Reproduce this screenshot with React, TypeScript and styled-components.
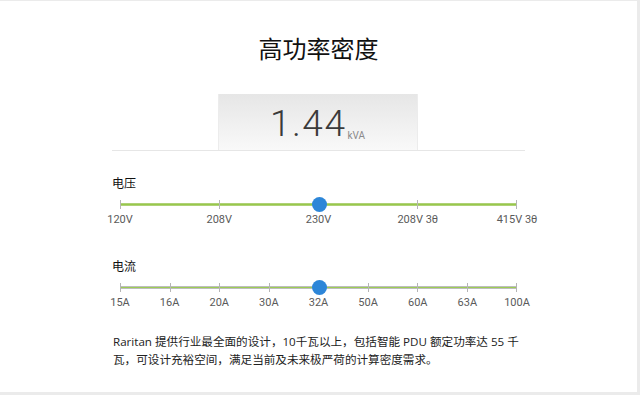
import React from "react";
import styled, { createGlobalStyle } from "styled-components";

const GlobalStyle = createGlobalStyle`
  html, body { margin: 0; padding: 0; background: #ebebeb; }
  body { font-family: Roboto, "Noto Sans CJK SC", sans-serif; }
`;

const Card = styled.div`
  width: 637px;
  height: 391px;
  margin-top: 1px;
  background: #ffffff;
  display: flex;
  justify-content: center;
`;

const Column = styled.div`
  width: 413px;
  display: flex;
  flex-direction: column;
  padding-top: 31px;
`;

const Title = styled.h1`
  margin: 0;
  font-family: "Noto Sans CJK SC", sans-serif;
  font-weight: 400;
  font-size: 24px;
  line-height: 32px;
  color: #111;
  text-align: center;
`;

const ValueRow = styled.div`
  margin-top: 30px;
  display: flex;
  justify-content: center;
  border-bottom: 1px solid #e6e6e6;
`;

const ValueBox = styled.div`
  width: 200px;
  height: 56px;
  margin-left: -2px;
  border-left: 1px solid #ececec;
  border-right: 1px solid #ececec;
  background: linear-gradient(#e6e6e6, #f9f9f9);
  display: flex;
  justify-content: center;
  align-items: flex-end;
  padding-bottom: 7px;
  box-sizing: border-box;
`;

const BigNumber = styled.span`
  font-family: Roboto, sans-serif;
  font-weight: 300;
  font-size: 37px;
  line-height: 38px;
  color: #3a3a3a;
  letter-spacing: 1.5px;
`;

const Unit = styled.span`
  font-family: Roboto, sans-serif;
  font-size: 10px;
  line-height: 10px;
  color: #8a8a8a;
  margin-left: 1px;
  margin-bottom: 2px;
`;

const Label = styled.div<{ $top: number }>`
  margin-top: ${(p) => p.$top}px;
  font-family: "Noto Sans CJK SC", sans-serif;
  font-size: 12px;
  line-height: 16px;
  color: #111;
`;

const SliderRow = styled.div`
  margin: 5px 8px 0;
  height: 16px;
  position: relative;
  display: flex;
  align-items: center;
`;

const Track = styled.div<{ $voltage: boolean }>`
  position: absolute;
  left: 0;
  right: 0;
  top: 7px;
  height: 3px;
  background: ${(p) =>
    p.$voltage
      ? "linear-gradient(#c4d9a0, #98c84a 35%, #98c84a 65%, #c4d9a0)"
      : "linear-gradient(#bdbdbd, #bdbdbd 34%, #9ccc54 34%, #9ccc54 66%, #bdbdbd 66%)"};
`;

const Ticks = styled.div`
  position: relative;
  flex: 1;
  display: flex;
  justify-content: space-between;
  height: 9px;
  margin-top: 1px;
`;

const Tick = styled.span`
  width: 1px;
  height: 9px;
  background: #b5b5b5;
`;

const Thumb = styled.span`
  position: absolute;
  left: 50%;
  top: 1px;
  width: 15px;
  height: 15px;
  margin-left: -7px;
  border-radius: 50%;
  background: #2d86d8;
`;

const TickLabels = styled.div`
  margin: 1px 8px 0;
  display: flex;
  justify-content: space-between;
  height: 14px;
`;

const TickLabel = styled.span`
  width: 0;
  display: flex;
  justify-content: center;
  white-space: nowrap;
  font-family: Roboto, sans-serif;
  font-size: 11px;
  line-height: 14px;
  color: #5a5a5a;
`;

const Paragraph = styled.p`
  margin: 23px 0 0 1px;
  font-family: "Open Sans", "Noto Sans CJK SC", sans-serif;
  font-size: 11.6px;
  line-height: 18px;
  color: #222;
  white-space: nowrap;
`;

function Slider({ labels, voltage }: { labels: string[]; voltage: boolean }) {
  return (
    <>
      <SliderRow>
        <Track $voltage={voltage} />
        <Ticks>
          {labels.map((l) => (
            <Tick key={l} />
          ))}
        </Ticks>
        <Thumb />
      </SliderRow>
      <TickLabels>
        {labels.map((l) => (
          <TickLabel key={l}>{l}</TickLabel>
        ))}
      </TickLabels>
    </>
  );
}

export default function App() {
  return (
    <>
      <GlobalStyle />
      <Card>
        <Column>
          <Title>高功率密度</Title>
          <ValueRow>
            <ValueBox>
              <BigNumber>1.44</BigNumber>
              <Unit>kVA</Unit>
            </ValueBox>
          </ValueRow>
          <Label $top={24}>电压</Label>
          <Slider voltage labels={["120V", "208V", "230V", "208V 3θ", "415V 3θ"]} />
          <Label $top={31}>电流</Label>
          <Slider
            voltage={false}
            labels={["15A", "16A", "20A", "30A", "32A", "50A", "60A", "63A", "100A"]}
          />
          <Paragraph>
            Raritan 提供行业最全面的设计，10千瓦以上，包括智能 PDU 额定功率达 55 千
            <br />
            瓦，可设计充裕空间，满足当前及未来极严荷的计算密度需求。
          </Paragraph>
        </Column>
      </Card>
    </>
  );
}
